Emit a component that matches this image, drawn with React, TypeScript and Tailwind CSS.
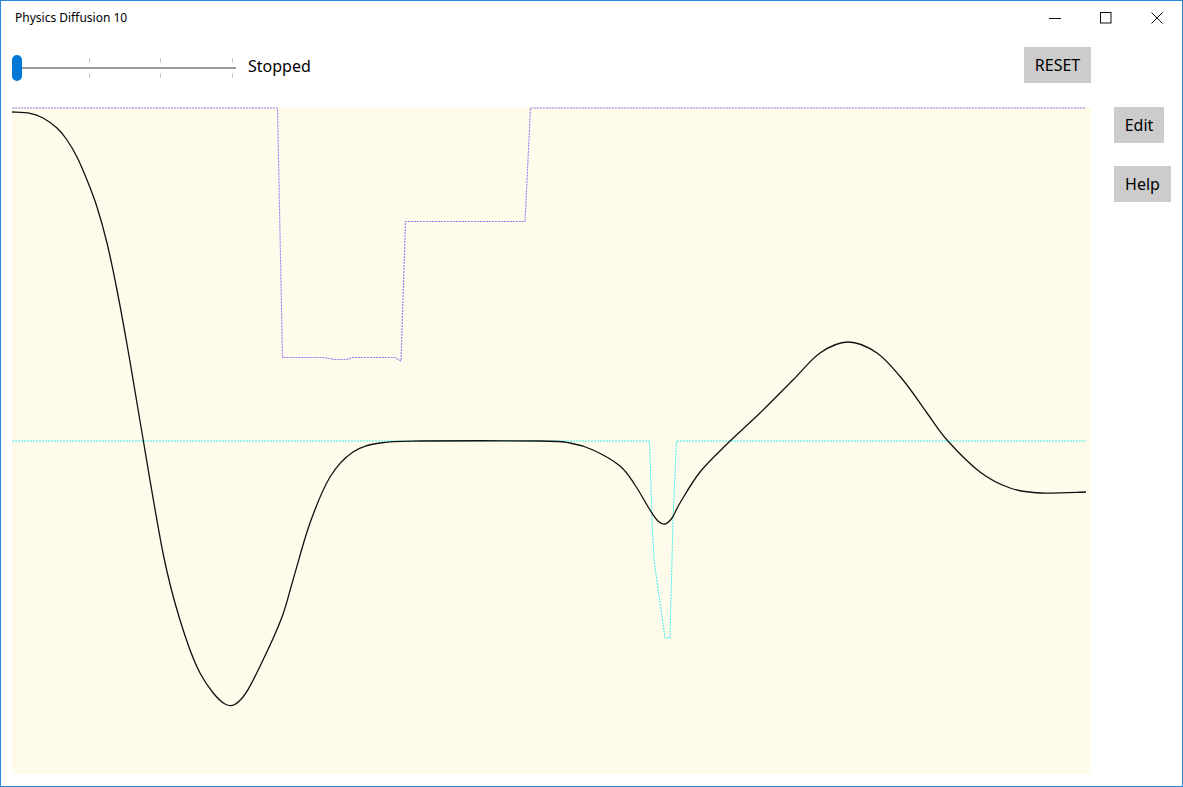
import React from "react";

type P = [number, number];

function smoothPath(pts: P[]): string {
  let d = `M${pts[0][0]},${pts[0][1]}`;
  for (let i = 0; i < pts.length - 1; i++) {
    const p0 = pts[i - 1] || pts[i];
    const p1 = pts[i];
    const p2 = pts[i + 1];
    const p3 = pts[i + 2] || p2;
    const c1x = p1[0] + (p2[0] - p0[0]) / 6;
    const c1y = p1[1] + (p2[1] - p0[1]) / 6;
    const c2x = p2[0] - (p3[0] - p1[0]) / 6;
    const c2y = p2[1] - (p3[1] - p1[1]) / 6;
    d += ` C${c1x.toFixed(2)},${c1y.toFixed(2)} ${c2x.toFixed(2)},${c2y.toFixed(2)} ${p2[0]},${p2[1]}`;
  }
  return d;
}

const blackPts: P[] = [
  [12, 112], [30, 113.3], [43, 118], [57, 128], [67, 140], [77, 157], [87, 180],
  [97, 207], [107, 243], [117, 290], [128, 350], [140, 421], [163, 553],
  [180, 620], [200, 673], [225, 704], [243, 697], [263, 660], [282, 617],
  [293, 580], [310, 523], [330, 477], [353, 452], [380, 443], [420, 441],
  [540, 441], [570, 443], [593, 450], [620, 466], [635, 485], [650, 510],
  [658, 521], [665, 524], [672, 518], [680, 503], [700, 472], [727, 444],
  [760, 413], [793, 380], [820, 353], [848, 342], [877, 353], [903, 380],
  [927, 413], [947, 440], [980, 472], [1010, 488], [1040, 493], [1086, 492],
];

const purplePts: P[] = [
  [12, 108], [277.5, 108], [282.5, 357.5], [323, 357.5], [335, 359.5], [347, 359.5],
  [352, 357.5], [395, 357.5], [401, 361], [405.5, 221.5], [525, 221.5], [530.5, 108],
  [1086, 108],
];

const cyanPts: P[] = [
  [12, 441], [649.5, 441], [652, 520], [654, 560], [665, 638], [670, 638],
  [673, 520], [676.5, 441], [1086, 441],
];

const poly = (pts: P[]) => pts.map((p) => p.join(",")).join(" ");

function Plot() {
  return (
    <div className="w-[1079px] h-[667px] bg-[#fffbeb] shrink-0">
      <svg width="1079" height="667" viewBox="12 107 1079 667" className="block overflow-visible">
        <polyline
          points={poly(purplePts)}
          fill="none"
          stroke="#9a78f2"
          strokeWidth="1.1"
          strokeDasharray="2 1"
        />
        <polyline
          points={poly(cyanPts)}
          fill="none"
          stroke="#38eeee"
          strokeWidth="1"
          strokeDasharray="2 1"
        />
        <path d={smoothPath(blackPts)} fill="none" stroke="#111" strokeWidth="1.3" />
      </svg>
    </div>
  );
}

function Slider() {
  return (
    <div className="relative w-[224px] h-[36px] shrink-0">
      <div className="absolute left-[4px] right-0 top-[20px] h-[2px] bg-[#9a9a9a]" />
      {[77, 148, 220].map((x) => (
        <React.Fragment key={x}>
          <div className="absolute top-[11px] h-[5px] w-px bg-[#c4c4c4]" style={{ left: x }} />
          <div className="absolute top-[26px] h-[5px] w-px bg-[#c4c4c4]" style={{ left: x }} />
        </React.Fragment>
      ))}
      <div className="absolute left-0 top-[8px] w-[10px] h-[26px] rounded-[5px] bg-[#0078d7]" />
    </div>
  );
}

export default function App() {
  return (
    <div
      className="w-[1183px] h-[787px] border border-[#2b88d8] bg-white flex flex-col overflow-hidden text-black"
      style={{ fontFamily: '"Noto Sans", "Open Sans", sans-serif' }}
    >
      {/* title bar */}
      <div className="h-[34px] flex items-center shrink-0">
        <div className="pl-[14px] text-[12px] leading-none">Physics Diffusion 10</div>
        <div className="ml-auto flex h-full">
          <div className="w-[51px] h-full flex items-center justify-center">
            <svg width="12" height="12" viewBox="0 0 12 12">
              <line x1="0" y1="6.5" x2="12" y2="6.5" stroke="#111" strokeWidth="1" />
            </svg>
          </div>
          <div className="w-[51px] h-full flex items-center justify-center">
            <svg width="12" height="12" viewBox="0 0 12 12">
              <rect x="0.5" y="0.5" width="10.5" height="10.5" fill="none" stroke="#111" strokeWidth="1" />
            </svg>
          </div>
          <div className="w-[51px] h-full flex items-center justify-center">
            <svg width="12" height="12" viewBox="0 0 12 12">
              <path d="M0.5 0.5 L11.5 11.5 M11.5 0.5 L0.5 11.5" stroke="#111" strokeWidth="1" />
            </svg>
          </div>
        </div>
      </div>

      {/* controls row */}
      <div className="pl-[11px] mt-[12px] shrink-0">
        <div className="w-[1079px] h-[36px] flex items-center">
          <Slider />
          <div className="ml-[12px] text-[16px] leading-none mt-[2px]">Stopped</div>
          <button className="ml-auto w-[67px] h-[36px] bg-[#cccccc] text-[16px] leading-none flex items-center justify-center">
            RESET
          </button>
        </div>
      </div>

      {/* main */}
      <div className="pl-[11px] mt-[24px] flex items-start">
        <Plot />
        <div className="ml-[23px] flex flex-col items-start gap-[23px]">
          <button className="w-[50px] h-[36px] bg-[#cccccc] text-[16px] leading-none flex items-center justify-center">
            Edit
          </button>
          <button className="w-[57px] h-[36px] bg-[#cccccc] text-[16px] leading-none flex items-center justify-center">
            Help
          </button>
        </div>
      </div>
    </div>
  );
}
